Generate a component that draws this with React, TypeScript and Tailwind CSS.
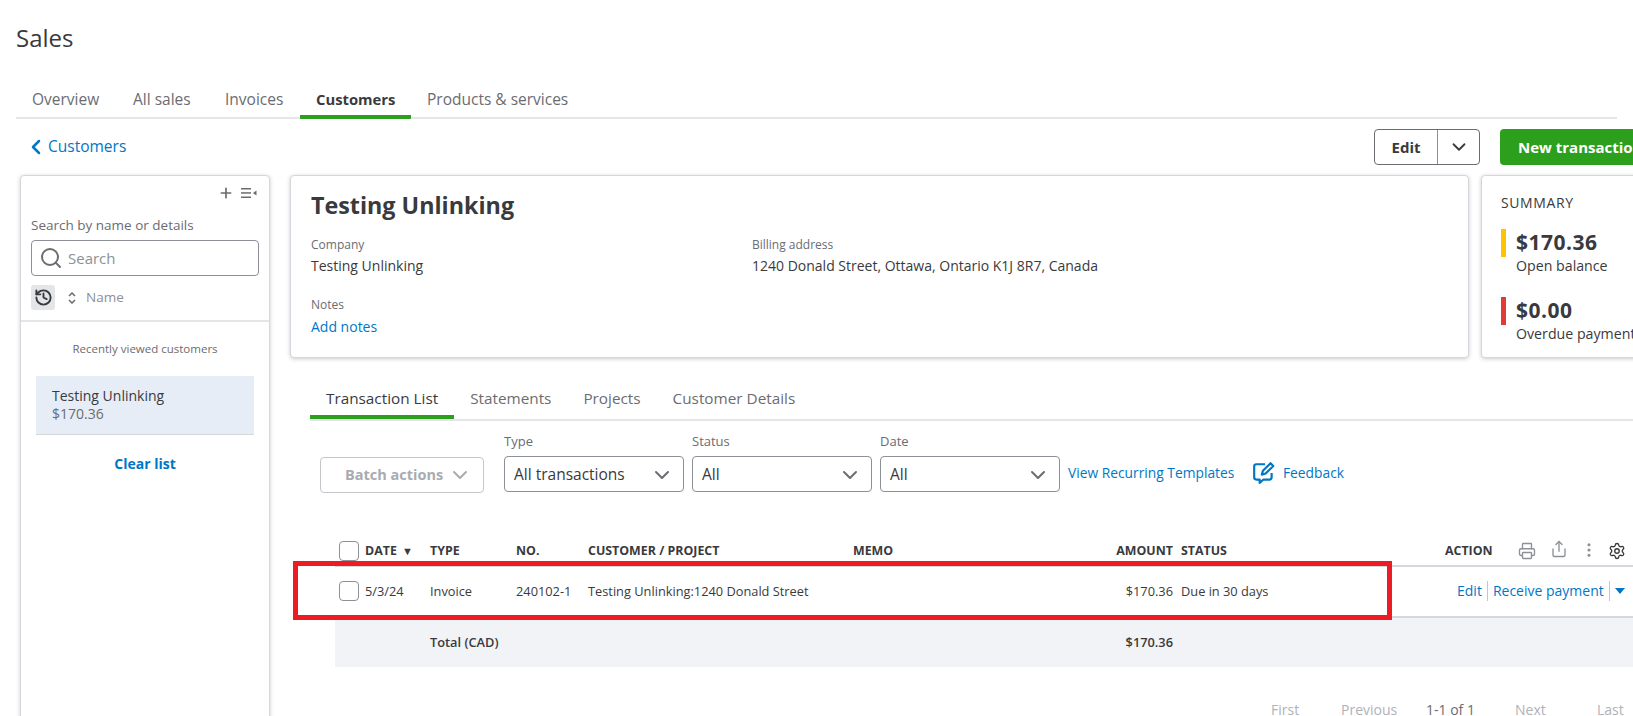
import { ChevronDown, ChevronLeft, History, MoreVertical, Plus, Printer, Search, Settings, Share } from "lucide-react";

const topTabs = [
  { name: "Overview", width: "w-[101px]", active: false },
  { name: "All sales", width: "w-[92px]", active: false },
  { name: "Invoices", width: "w-[91px]", active: false },
  { name: "Customers", width: "w-[111px]", active: true },
  { name: "Products & services", width: "w-[180px]", active: false },
];

const detailTabs = [
  { name: "Transaction List", active: true },
  { name: "Statements", active: false },
  { name: "Projects", active: false },
  { name: "Customer Details", active: false },
];

function FilterSelect({ label, value, width }: { label: string; value: string; width: string }) {
  return (
    <div className={width}>
      <div className="h-[18px] text-[13px] leading-[18px] text-[#6b6c72]">{label}</div>
      <div className="mt-[6px] flex h-[36px] items-center justify-between rounded-[4px] border border-[#8d9096] pl-[9px] pr-[9px] pt-[1px] text-[15.5px] text-[#393a3d]">
        <span>{value}</span>
        <ChevronDown className="h-[24px] w-[24px] text-[#6b6c72]" strokeWidth={2} />
      </div>
    </div>
  );
}

function SummaryStat({ amount, label, color }: { amount: string; label: string; color: string }) {
  return (
    <div className="flex gap-[10px]">
      <div className={`mt-[1px] h-[28px] w-[5px] ${color}`} />
      <div>
        <div className="text-[21px] font-bold leading-[28px] tracking-[0.5px] text-[#393a3d]">{amount}</div>
        <div className="mt-[1px] whitespace-nowrap text-[14.2px] leading-[18px] text-[#393a3d]">{label}</div>
      </div>
    </div>
  );
}

function Checkbox() {
  return <div className="h-[20px] w-[20px] rounded-[4px] border border-[#8d9096] bg-white" />;
}

function FeedbackIcon() {
  return (
    <svg viewBox="0 0 22 22" className="h-[24px] w-[24px] text-[#0077c5]" fill="none" stroke="currentColor" strokeWidth="2">
      <path d="M12 3H4a2 2 0 0 0-2 2v10a2 2 0 0 0 2 2h3v3l3.5-3H16a2 2 0 0 0 2-2v-4" strokeLinejoin="round" />
      <path d="M9 12.5l1-3.5 7-7 2.5 2.5-7 7z" strokeLinejoin="round" />
    </svg>
  );
}

export default function App() {
  return (
    <div className="relative h-[716px] w-[1633px] overflow-hidden bg-white font-['Open_Sans',sans-serif] text-[#393a3d]">
      {/* Page title */}
      <h1 className="pl-4 pt-[22px] text-[24px] font-medium leading-[32px] text-[#393a3d]">Sales</h1>

      {/* Top tabs */}
      <nav className="mx-4 mt-[27px] flex h-[38px] border-b-2 border-[#e3e5e8]">
        {topTabs.map((tab) => (
          <div
            key={tab.name}
            className={`h-[38px] whitespace-nowrap pl-4 pt-[8px] leading-[20px] ${tab.width} ${
              tab.active ? "rounded-b-[1px] border-b-4 border-[#2ca01c] text-[14.8px] font-bold text-[#393a3d]" : "text-[15.5px] text-[#6b6c72]"
            }`}
          >
            {tab.name}
          </div>
        ))}
      </nav>

      {/* Back link and page actions */}
      <div className="mt-[10px] flex h-[36px] items-center pl-[24px]">
        <div className="flex w-[1350px] shrink-0 items-center text-[15.5px] text-[#0077c5]">
          <ChevronLeft className="h-[24px] w-[24px]" strokeWidth={2.5} />
          <span>Customers</span>
        </div>
        <div className="flex h-[36px] w-[106px] shrink-0 rounded-[4px] border border-[#6b6c72] text-[15px] font-bold text-[#393a3d]">
          <div className="flex w-[63px] items-center justify-center border-r border-[#8d9096]">Edit</div>
          <div className="flex flex-1 items-center justify-center">
            <ChevronDown className="h-[22px] w-[22px]" strokeWidth={2} />
          </div>
        </div>
        <div className="ml-[20px] flex h-[36px] w-[170px] shrink-0 items-center whitespace-nowrap rounded-[4px] bg-[#2ca01c] pl-[18px] text-[15px] font-bold text-white">
          New transaction
        </div>
      </div>

      <div className="mt-[10px] flex items-start pl-[20px]">
        {/* Customer list */}
        <aside className="h-[600px] w-[250px] shrink-0 rounded-[4px] border border-[#d4d7dc] bg-white shadow-[0_1px_4px_rgba(0,0,0,0.2)]">
          <div className="flex h-[28px] items-center justify-end pr-[12px] pt-[6px] text-[#6b6c72]">
            <Plus className="h-[16px] w-[16px]" strokeWidth={2.5} />
            <svg viewBox="0 0 16 12" className="ml-[7px] h-[12px] w-[16px]" fill="currentColor">
              <rect x="0" y="1" width="10" height="1.5" />
              <rect x="0" y="5.2" width="10" height="1.5" />
              <rect x="0" y="9.5" width="10" height="1.5" />
              <path d="M15.5 3.5v5L12 6z" />
            </svg>
          </div>
          <div className="px-[10px]">
            <div className="mt-[12px] text-[13.5px] leading-[18px] text-[#6b6c72]">Search by name or details</div>
            <div className="mt-[6px] flex h-[36px] items-center rounded-[4px] border border-[#8d9096] pl-[7px] text-[15px] text-[#8d9096]">
              <Search className="h-[24px] w-[24px] text-[#6b6c72]" strokeWidth={2} />
              <span className="ml-[5px]">Search</span>
            </div>
            <div className="mt-[9px] flex h-[25px] items-center">
              <div className="flex h-[25px] w-[24px] items-center justify-center rounded-[3px] bg-[#e3e5e8]">
                <History className="h-[19px] w-[19px] text-[#393a3d]" strokeWidth={2.4} />
              </div>
              <svg viewBox="0 0 8 12" className="ml-[13px] h-[12px] w-[8px] text-[#6b6c72]" fill="none" stroke="currentColor" strokeWidth="1.5">
                <path d="M1 4l3-3 3 3M1 8l3 3 3-3" />
              </svg>
              <span className="ml-[10px] text-[13.5px] text-[#8d9096]">Name</span>
            </div>
          </div>
          <div className="mt-[10px] border-t-2 border-[#e3e5e8]" />
          <div className="mt-[18px] text-center text-[11.5px] leading-[18px] text-[#6b6c72]">Recently viewed customers</div>
          <div className="mx-[15px] mt-[18px] h-[59px] border-b border-[#d4d7dc] bg-[#e6edf7] pl-[16px] pt-[11px]">
            <div className="text-[14px] font-medium leading-[18px] text-[#393a3d]">Testing Unlinking</div>
            <div className="text-[14px] leading-[17px] text-[#6b6c72]">$170.36</div>
          </div>
          <div className="mt-[19px] text-center text-[14px] font-bold leading-[20px] text-[#0077c5]">Clear list</div>
        </aside>

        {/* Main column */}
        <main className="ml-[20px] w-[1343px] shrink-0">
          <div className="flex gap-[12px]">
            <section className="h-[183px] w-[1179px] shrink-0 rounded-[4px] border border-[#d4d7dc] bg-white pl-[20px] shadow-[0_1px_4px_rgba(0,0,0,0.2)]">
              <h2 className="mt-[13px] text-[23.3px] font-bold leading-[32px] text-[#393a3d]">Testing Unlinking</h2>
              <div className="mt-[15px] flex">
                <div className="w-[441px]">
                  <div className="text-[12px] leading-[18px] text-[#6b6c72]">Company</div>
                  <div className="mt-[2px] text-[14px] leading-[20px]">Testing Unlinking</div>
                </div>
                <div>
                  <div className="text-[12px] leading-[18px] text-[#6b6c72]">Billing address</div>
                  <div className="mt-[2px] text-[14px] leading-[20px]">1240 Donald Street, Ottawa, Ontario K1J 8R7, Canada</div>
                </div>
              </div>
              <div className="mt-[20px] text-[12px] leading-[18px] text-[#6b6c72]">Notes</div>
              <div className="mt-[3px] text-[14px] leading-[20px] text-[#0077c5]">Add notes</div>
            </section>
            <section className="h-[183px] w-[220px] shrink-0 rounded-[4px] border border-[#d4d7dc] bg-white pl-[19px] shadow-[0_1px_4px_rgba(0,0,0,0.2)]">
              <div className="mt-[18px] text-[14px] leading-[18px] tracking-[0.6px] text-[#393a3d]">SUMMARY</div>
              <div className="mt-[16px]">
                <SummaryStat amount="$170.36" label="Open balance" color="bg-[#ffc400]" />
              </div>
              <div className="mt-[21px]">
                <SummaryStat amount="$0.00" label="Overdue payment" color="bg-[#e03a3a]" />
              </div>
            </section>
          </div>

          {/* Detail tabs */}
          <nav className="mt-[22px] ml-[20px] flex h-[41px] border-b-2 border-[#e3e5e8]">
            {detailTabs.map((tab) => (
              <div
                key={tab.name}
                className={`h-[39px] px-4 pt-[8px] text-[15.3px] leading-[20px] ${
                  tab.active ? "border-b-4 border-[#2ca01c] text-[#393a3d]" : "text-[#6b6c72]"
                }`}
              >
                {tab.name}
              </div>
            ))}
          </nav>

          {/* Filters */}
          <div className="ml-[30px] mt-[11px] flex items-start">
            <div className="mt-[25px] flex h-[36px] w-[164px] items-center justify-between rounded-[4px] border border-[#c4c6ca] pl-[24px] pr-[11px] text-[14.5px] font-bold text-[#a9abb0]">
              <span className="whitespace-nowrap">Batch actions</span>
              <ChevronDown className="h-[24px] w-[24px]" strokeWidth={2} />
            </div>
            <div className="ml-[20px] flex gap-[8px]">
              <FilterSelect label="Type" value="All transactions" width="w-[180px]" />
              <FilterSelect label="Status" value="All" width="w-[180px]" />
              <FilterSelect label="Date" value="All" width="w-[180px]" />
            </div>
            <div className="ml-[8px] mt-[32px] flex h-[18px] items-center whitespace-nowrap text-[13.8px] text-[#0077c5]">
              <span className="w-[166px]">View Recurring Templates</span>
              <div className="ml-[18px]">
                <FeedbackIcon />
              </div>
              <span className="ml-[7px]">Feedback</span>
            </div>
          </div>

          {/* Transactions table */}
          <div className="ml-[45px] mt-[48px] text-[12.8px]">
            <div className="grid h-[26px] grid-cols-[30px_65px_86px_72px_265px_200px_120px_8px_264px_188px_1fr] items-start border-b-2 border-[#d4d7dc] text-[12.4px] font-bold leading-[20px] text-[#393a3d]">
              <div className="ml-[4px]">
                <Checkbox />
              </div>
              <div className="whitespace-nowrap">DATE <span className="ml-[2px] text-[11px]">▼</span></div>
              <div>TYPE</div>
              <div>NO.</div>
              <div className="whitespace-nowrap">CUSTOMER / PROJECT</div>
              <div>MEMO</div>
              <div className="text-right">AMOUNT</div>
              <div />
              <div>STATUS</div>
              <div className="flex items-center text-[#8d9096]">
                <span className="w-[73px] text-[#393a3d]">ACTION</span>
                <Printer className="h-[18px] w-[18px]" strokeWidth={1.8} />
                <Share className="ml-[14px] h-[18px] w-[18px] -translate-y-[2px]" strokeWidth={1.8} />
                <MoreVertical className="ml-[12px] h-[18px] w-[18px] -translate-y-[1px]" strokeWidth={2.2} />
                <Settings className="ml-[10px] h-[18px] w-[18px] text-[#393a3d]" strokeWidth={1.8} />
              </div>
            </div>
            <div className="grid h-[51px] grid-cols-[30px_65px_86px_72px_265px_200px_120px_8px_264px_1fr] items-center border-b-2 border-[#d4d7dc] pb-[1px] leading-[20px] text-[#393a3d]">
              <div className="ml-[4px]">
                <Checkbox />
              </div>
              <div>5/3/24</div>
              <div>Invoice</div>
              <div className="whitespace-nowrap">240102-1</div>
              <div className="whitespace-nowrap">Testing Unlinking:1240 Donald Street</div>
              <div />
              <div className="text-right">$170.36</div>
              <div />
              <div>Due in 30 days</div>
              <div className="ml-[12px] flex items-center whitespace-nowrap text-[14px] text-[#0077c5]">
                <span>Edit</span>
                <span className="mx-[5px] h-[20px] w-px bg-[#c4c6ca]" />
                <span>Receive payment</span>
                <span className="mx-[5px] h-[20px] w-px bg-[#c4c6ca]" />
                <span className="h-0 w-0 border-x-[5px] border-t-[6px] border-x-transparent border-t-[#0077c5]" />
              </div>
            </div>
            <div className="grid h-[49px] grid-cols-[95px_423px_200px_120px] items-center bg-[#f2f3f7] pb-[2px] font-semibold leading-[20px] text-[#393a3d]">
              <div />
              <div>Total (CAD)</div>
              <div />
              <div className="text-right">$170.36</div>
            </div>

            {/* Pagination */}
            <div className="mt-[37px] flex h-[12px] items-center pl-[936px] text-[14px] leading-[12px] text-[#b0b2b7]">
              <span className="w-[70px]">First</span>
              <span className="w-[85px]">Previous</span>
              <span className="w-[89px] text-[#6b6c72]">1-1 of 1</span>
              <span className="w-[82px]">Next</span>
              <span>Last</span>
            </div>
          </div>
        </main>
      </div>

      {/* Red annotation around the invoice row */}
      <div className="absolute left-[293px] top-[561px] h-[59px] w-[1099px] border-[5px] border-[#ed1c24]" />
    </div>
  );
}
